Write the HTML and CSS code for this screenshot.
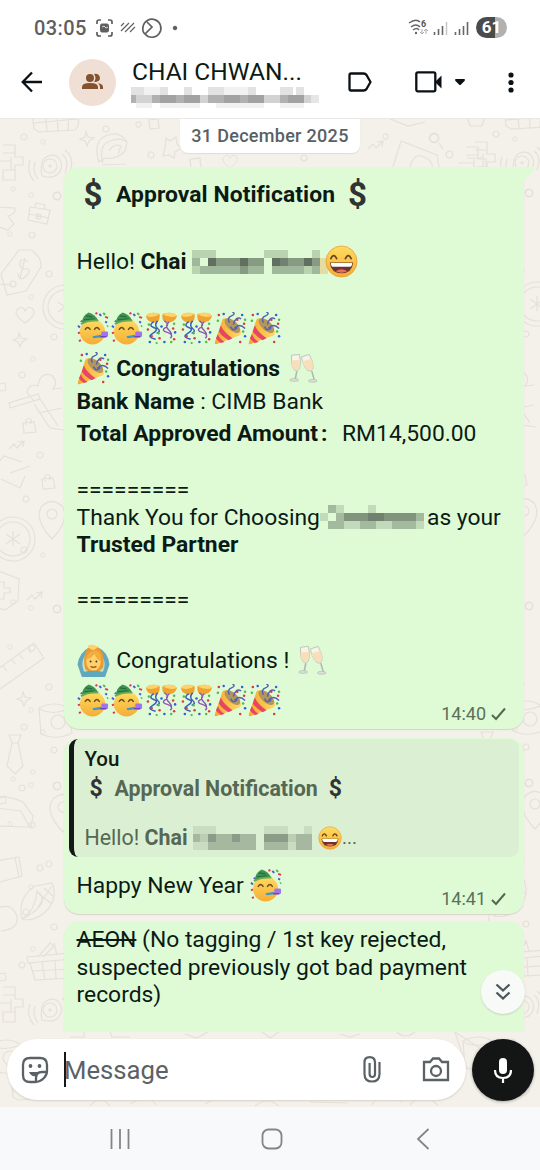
FILE: index.html
```html
<!DOCTYPE html>
<html lang="en">
<head>
  <meta charset="UTF-8">
  <meta name="viewport" content="width=device-width, initial-scale=1.0">
  <title>Chat</title>
  <link rel="stylesheet" href="styles.css">
</head>
<body>
  <!-- shared emoji and wallpaper shapes -->
  <svg class="defs" width="0" height="0">
    <defs>
      <linearGradient id="face" x1="0" y1="0" x2="0" y2="1"><stop offset="0" stop-color="#ffdc62"/><stop offset="1" stop-color="#f5ad35"/></linearGradient>
      <linearGradient id="cone" x1="0" y1="0" x2="1" y2="0"><stop offset="0" stop-color="#f6a72d"/><stop offset="1" stop-color="#ffd967"/></linearGradient>
      <symbol id="grin" viewBox="0 0 34 34">
        <circle cx="17" cy="17" r="16" fill="url(#face)" stroke="#e89b32" stroke-width=".8"/>
        <path d="M6 14q3-6 6 0M21 14q3-6 6 0" fill="none" stroke="#66421c" stroke-width="1.8" stroke-linecap="round"/>
        <path d="M5 18h24q-1 11-12 11T5 18z" fill="#69342a"/>
        <path d="M6 18.5h22q0 4-3 4H9q-3 0-3-4z" fill="#fff"/>
        <path d="M11 27q6-4 12 0-6 3-12 0z" fill="#ee6961"/>
      </symbol>
      <symbol id="party" viewBox="0 0 34 34">
        <circle cx="16" cy="20.500" r="13" fill="url(#face)"/>
        <path d="M5 12Q5 4 12 .5q7 2 10 8.500Q13 8 5 12z" fill="#3f9452"/>
        <path d="M9 4l7 1M7 8l11-1" stroke="#276c3d" stroke-width="1.200"/>
        <path d="M4 12.500q8-4.500 18-3.500" fill="none" stroke="#6cab52" stroke-width="1.800"/>
        <path d="M8.500 18q2.500-4 5 0M18 18q2.500-4 5 0" fill="none" stroke="#74491d" stroke-width="1.500" stroke-linecap="round"/>
        <path d="M16 25l9-1.500V26l-8 1z" fill="#3b98c9"/>
        <rect x="25" y="20" width="7" height="6" rx="1.500" fill="#a274ec"/><path d="M24 25.500h6" stroke="#7040c4" stroke-width="1.500"/>
        <path d="M1 14l2 2M23 2l2 2M31 11l-2-1M4 9l1 1" stroke="#4b58dd" stroke-width="2"/>
        <path d="M29 5l3 1M1 22l2-1M2 30l2-1M19 2l2-1" stroke="#dd3654" stroke-width="2"/>
        <path d="M27 1l2 2M31 15l1-1" stroke="#51b952" stroke-width="2"/>
      </symbol>
      <symbol id="confetti" viewBox="0 0 34 34">
        <path d="M1 4Q5-1 15 2q1 8-4 9Q2 11 1 4zM33 4Q29-1 18 2q-1 8 4 9 9 0 11-7z" fill="#efa331"/>
        <path d="M1 4Q5-1 15 2 9 7 1 4zM33 4Q29-1 18 2q7 5 15 2z" fill="#ffd36a"/>
        <path d="M9 10q-6 4 0 6t-1 6 3 6M13 9q-4 5 0 8t-1 5" fill="none" stroke="#385bb8" stroke-width="1.500"/>
        <path d="M20 9q6 4 1 7t2 5 3 6M25 10q-5 4-1 8t3 5" fill="none" stroke="#8b58b4" stroke-width="1.500"/>
        <g fill="#d93d46"><circle cx="3" cy="18" r="1.300"/><circle cx="15" cy="27" r="1.300"/><circle cx="29" cy="17" r="1.300"/><circle cx="30" cy="28" r="1.300"/><circle cx="7" cy="25" r="1.200"/></g>
        <g fill="#345fd5"><circle cx="5" cy="31" r="1.300"/><circle cx="17" cy="15" r="1.300"/><circle cx="31" cy="21" r="1.300"/><circle cx="20" cy="31" r="1.300"/></g>
        <g fill="#54bc4e"><circle cx="4" cy="13" r="1.300"/><circle cx="14" cy="22" r="1.300"/><circle cx="30" cy="12" r="1.300"/><circle cx="27" cy="31" r="1.300"/><circle cx="12" cy="32" r="1.200"/></g>
      </symbol>
      <symbol id="popper" viewBox="0 0 34 34">
        <path d="M8 10Q9 5 14 7q12 5 14 14 0 3-4 4L3 33q-3 1-2-2z" fill="url(#cone)"/>
        <path d="M7 14q3 7 12 13l-4 2Q8 25 5 20zM4 23q2 5 7 8l-4 1q-4-3-5-5z" fill="#e64663"/>
        <ellipse cx="19" cy="14" rx="10" ry="5" transform="rotate(42 19 14)" fill="#b3965a"/>
        <path d="M16 11q-3-5 2-7t1-4M20 13q2-9 8-6M21 17q5-6 11 0M17 15q3 6 7 1" fill="none" stroke="#5361b4" stroke-width="1.500"/>
        <g fill="#2e60dc"><circle cx="10" cy="2" r="1.300"/><circle cx="29" cy="3" r="1.300"/><circle cx="32" cy="25" r="1.300"/></g>
        <g fill="#df354c"><circle cx="5" cy="3" r="1.300"/><circle cx="24" cy="8" r="1.300"/><circle cx="31" cy="12" r="1.300"/><circle cx="27" cy="31" r="1.300"/></g>
        <g fill="#50b94d"><circle cx="4" cy="9" r="1.300"/><circle cx="32" cy="8" r="1.300"/><circle cx="30" cy="20" r="1.300"/></g>
      </symbol>
      <symbol id="glasses" viewBox="0 0 34 34">
        <g stroke="#b7c1b3" stroke-width="1">
          <path d="M4 2l9-1q3 17-3 19-7-1-6-18zM15 4l9-3q8 15 2 19-7 1-11-16z" fill="#f4f4e8"/>
          <path d="M4 8l9.500-1q1 11-3.500 12-6 0-6-11zM16 9l10.500-3q4 10-1 13-6 0-9.500-10z" fill="#f8dfba" stroke="none"/>
          <path d="M10 20L8 30M27 20l3 11" stroke="#aeb9ae" stroke-width="1.800"/>
          <ellipse cx="7" cy="30" rx="5" ry="1.500" fill="#dce4dc"/><ellipse cx="28" cy="31" rx="5" ry="1.500" fill="#dce4dc"/>
        </g>
      </symbol>
      <symbol id="okwoman" viewBox="0 0 34 34">
        <path d="M5 34L.5 21Q2 9 13 3q4-2 8 0 11 5 12.500 18L29 34z" fill="#62a9bf"/>
        <path d="M7 28Q3 17 10 10h14q7 8 3 18-10 7-20 0z" fill="#c8e3c4"/>
        <path d="M8 25Q5 5 16 2q14 1 11 22-3 5-10 5-7 0-9-4z" fill="#e99a32"/>
        <ellipse cx="17" cy="18" rx="7.500" ry="9.500" fill="#ffd169"/>
        <path d="M9 16Q12 5 21 7q5 3 4 11-5-2-7-8-3 5-9 6z" fill="#f2ac3f"/>
        <path d="M11 2q4-3 11 1l-4 3q-4 1-7-4z" fill="#ffd169"/>
        <circle cx="14" cy="18" r="1" fill="#49362a"/><circle cx="20" cy="18" r="1" fill="#49362a"/><path d="M14 23q3 2 6 0" fill="none" stroke="#ae4530" stroke-width="1.500"/>
        <path d="M6 29q11-3 22 0l-2 5H8z" fill="#5ca8c0"/>
      </symbol>

      <symbol id="d-maze" viewBox="0 0 26 38" overflow="visible"><path d="M4 1h12v12h8v8h-8v15H4V26h8v-9H-4M4 9h12M12 13v13h4"/></symbol>
      <symbol id="d-alarm" viewBox="0 0 44 34" overflow="visible"><path d="M12 27q-3-16 6-20 8-3 12 4t-2 14q-6 5-16 2zM8 30Q2 22 5 13M4 32q-8-9-4-21M32 5q8 6 3 19M35 1q10 8 5 21"/><circle cx="20" cy="17" r="7"/><circle cx="20" cy="17" r="1"/></symbol>
      <symbol id="d-choc" viewBox="0 0 50 16" overflow="visible"><path d="M1-6l2 19 5 3 36-2 3-4 2-16M3 7l44-4M14-4l2 19M26-4l1 19M38-4l-1 19"/></symbol>
      <symbol id="d-case" viewBox="0 0 24 22" overflow="visible"><path d="M2 5l20 3-3 14L0 18zM7 6l1-5 9 2-1 5M1 12l20 4M9 12l4 1-1 4-4-1z"/></symbol>
      <symbol id="d-basket" viewBox="0 0 44 34" overflow="visible"><path d="M0 10l44-4v6L1 16zM3 16l5 17 36-2M15 15l3 18M28 14l1 18M5 24l39-2M11 10L23-4l4 3-11 11M30 8l-3-12"/></symbol>
      <symbol id="d-bag" viewBox="0 0 14 14" overflow="visible"><path d="M1 4l11-1 2 10-12 1zM4 6V1q3-3 5 0v4"/></symbol>
      <symbol id="d-heart" viewBox="0 0 18 16" overflow="visible"><path d="M9 16Q-4 7 2 2q5-4 7 2 3-6 8-2 4 6-8 14z"/></symbol>
      <symbol id="d-star" viewBox="0 0 14 14" overflow="visible"><path d="M6 0l2 5 6 1-5 3-2 5-2-5-5-2 5-2z"/></symbol>
      <symbol id="d-taco" viewBox="0 0 36 34" overflow="visible"><path d="M4 28Q-3 6 13 1q12-4 19 7l-2 9q-8 9-20 7zM8 29q-5-18 7-22 10-4 17 1M7 31l24-1M14 17q5-8 12-5l-3 8"/></symbol>
      <symbol id="d-tag" viewBox="0 0 40 46" overflow="visible"><path d="M18 1h12q11 7 10 17L25 42 6 46 0 25z"/><path d="M27 13q-7-5-8 1t6 6 0 7-8-3M24 9l-5 20"/><circle cx="12" cy="35" r="3"/></symbol>
      <symbol id="d-coin" viewBox="0 0 46 46" overflow="visible"><circle cx="23" cy="23" r="22"/><circle cx="23" cy="23" r="17"/><path d="M23 15v15M16 18l14 10M30 18L16 28"/></symbol>
      <symbol id="d-ruler" viewBox="0 0 60 46" overflow="visible"><path d="M0 34L47 0l10 15L10 48zM8 28l3 4M16 23l4 5M25 17l3 4M33 12l3 4M41 6l3 4"/></symbol>
      <symbol id="d-cup" viewBox="0 0 36 36" overflow="visible"><path d="M0 5q16-8 29 0l4 25q-16 8-31 1zM0 6q14 7 29 0"/><circle cx="19" cy="19" r="7"/></symbol>
      <symbol id="d-corn" viewBox="0 0 36 38" overflow="visible"><path d="M2 36Q-3 15 15 3l17-3q7 17-8 30-11 9-22 6zM2 36q13-8 15-28 16 12-15 28M18 10l14 11M24 5l10 9M18 24L31 4"/></symbol>
      <symbol id="d-tie" viewBox="0 0 16 38" overflow="visible"><path d="M2 0h12l-3 8 5 23-8 8-8-8L5 8zM5 8h6"/></symbol>
      <symbol id="d-pin" viewBox="0 0 28 38" overflow="visible"><path d="M14 38Q-5 18 4 5q10-9 20 0 9 13-10 33z"/><circle cx="14" cy="13" r="5"/></symbol>
      <symbol id="d-shield" viewBox="0 0 28 38" overflow="visible"><path d="M-4 4l14-4 18 7-1 22-13 9-18-6M2 16h6v-6h5v6h6v5h-6v6H8v-6H2"/></symbol>
      <symbol id="d-box" viewBox="0 0 10 10" overflow="visible"><path d="M0 1l9-1 1 9-9 1z"/></symbol>
      <symbol id="d-dot" viewBox="0 0 8 8" overflow="visible"><circle cx="4" cy="4" r="3"/></symbol>
      <symbol id="d-zig" viewBox="0 0 16 10" overflow="visible"><path d="M0 8l5-5 3 4 6-6M9 1l6-1-1 6"/></symbol>
      <g id="strip">
        <use href="#d-maze" x="-1" y="25" width="26" height="38"/><use href="#d-alarm" x="30" y="30" width="44" height="34"/><use href="#d-choc" x="31" y="-3" width="50" height="16"/>
        <use href="#d-case" x="28" y="83" width="24" height="22"/><use href="#d-tag" x="1" y="130" width="40" height="46"/><use href="#d-heart" x="16" y="188" width="18" height="16"/>
        <use href="#d-star" x="13" y="214" width="14" height="14"/><use href="#d-coin" x="42" y="165" width="46" height="46"/><path d="M34 282l-7-9q2-9 11-6 2-14 13-11 8 6 2 14l9-1M10 289l30-9-2-5-29 9zM34 285l16 24 14 2M40 280l18 27M38 294l24-5"/>
        <use href="#d-bag" x="22" y="300" width="14" height="14"/><use href="#d-bag" x="41" y="356" width="14" height="14"/><use href="#d-zig" x="9" y="322" width="16" height="10"/>
        <path d="M-4 346l8-9 18 6M10 354l20-7M1 360l19 9 5-12M-4 88l19 1q1 6-7 8l6 8-6 6-12-4M-4 165l16 1"/>
        <use href="#d-coin" x="-10" y="397" width="46" height="46"/><use href="#d-pin" x="38" y="382" width="28" height="38"/><use href="#d-shield" x="-9" y="453" width="28" height="38"/><use href="#d-zig" x="27" y="473" width="16" height="10"/>
        <use href="#d-ruler" x="-13" y="524" width="60" height="46"/><use href="#d-star" x="17" y="573" width="14" height="14"/><use href="#d-cup" x="39" y="580" width="36" height="44"/><use href="#d-tie" x="7" y="616" width="16" height="38"/>
        <path d="M-4 680q10-5 27 3l10 14-2 11-35-1M-4 689l25 3 8 15M-4 742l23-4 3 19-22 6M15 739l4 19M-3 789q16-6 20 9 2 12-16 14"/>
        <use href="#d-corn" x="20" y="764" width="36" height="38"/><use href="#d-basket" x="27" y="828" width="44" height="34"/><use href="#d-maze" x="-1" y="867" width="26" height="38"/><use href="#d-alarm" x="30" y="874" width="44" height="34"/>
        <use href="#d-pin" x="49" y="675" width="28" height="38"/><use href="#d-choc" x="10" y="965" width="50" height="16"/><use href="#d-cup" x="-9" y="920" width="36" height="36"/>
        <g id="dots">
          <use href="#d-dot" x="20" y="14" width="8" height="8"/><use href="#d-dot" x="40" y="20" width="6" height="6"/><use href="#d-dot" x="10" y="67" width="6" height="6"/><use href="#d-dot" x="28" y="73" width="6" height="6"/><use href="#d-dot" x="52" y="72" width="10" height="10"/>
          <use href="#d-dot" x="28" y="112" width="8" height="8"/><use href="#d-dot" x="7" y="112" width="6" height="6"/><use href="#d-dot" x="45" y="151" width="8" height="8"/><use href="#d-dot" x="28" y="175" width="6" height="6"/><use href="#d-dot" x="50" y="214" width="8" height="8"/><use href="#d-dot" x="18" y="252" width="8" height="8"/><use href="#d-dot" x="30" y="237" width="6" height="6"/>
          <use href="#d-dot" x="36" y="332" width="8" height="8"/><use href="#d-dot" x="22" y="376" width="8" height="8"/><use href="#d-box" x="-2" y="263" width="8" height="10"/>
        </g>
        <use href="#dots" y="413"/><use href="#dots" y="590"/>
      </g>
    </defs>
  </svg>

  <div class="phone">
    <header class="status-bar">
      <span class="clock">03:05</span>
      <svg class="status-icons" width="84" height="22" viewBox="0 0 84 22" fill="none" stroke="#5e5e5e" stroke-width="1.700">
        <path d="M7 3H5q-2 0-2 2v2M3 15v2q0 2 2 2h2M14 3h2q2 0 2 2v2M18 15v2q0 2-2 2h-2"/><rect x="6.500" y="7" width="8" height="8" rx="1.500" fill="#5e5e5e" stroke-width="1"/><path d="M8 10l2-1 2 2 2-1" stroke="#ddd" stroke-width="1"/>
        <path d="M27 9l3-3M27 14l8-8M31 15l9-9M36 15l5-5" stroke-width="1.100"/>
        <path d="M51 17a9 9 0 1 0-2-7q-1 5 2 7l7-7-5-5" stroke-width="1.700"/>
        <circle cx="81" cy="11" r="1.800" fill="#5e5e5e" stroke-width="1"/>
      </svg>
      <div class="status-right">
        <svg width="63" height="20" viewBox="0 0 63 20" fill="none" stroke="#666">
          <path d="M2 5q7-5 11-1M4 9q5-4 9 0M6 12q4-3 6 0" stroke-width="1.500"/><circle cx="9" cy="15" r="1.200" fill="#666" stroke="none"/>
          <path d="M15 11v5m-2-2l2 2 2-2M19 16v-5m-2 2l2-2 2 2" stroke="#aaa"/>
          <path d="M27.500 17v-3M31.500 17v-6M35.500 17V8M48.500 17v-3M52.500 17v-6M56.500 17V8M60.500 17V4" stroke-width="1.600"/><path d="M39.500 17V4" stroke="#c6c6c6" stroke-width="1.500"/>
          <text x="14" y="9" class="wifi-number">6</text>
        </svg>
        <span class="battery">61</span>
      </div>
    </header>

    <div class="app-bar">
      <svg class="back" width="22" height="22" viewBox="0 0 22 22" fill="none" stroke="#0b1014" stroke-width="2.300"><path d="M21 11H2M11 1.500L1.700 11l9.300 9.500"/></svg>
      <div class="avatar">
        <svg width="22" height="18" viewBox="0 0 22 18" fill="#83532f"><circle cx="8" cy="5" r="4"/><path d="M0 16v-2q0-4 8-4t8 4v2zM12 9q3-4 0-8 5-1 6 4 0 4-6 4zM16 10q5 1 5 4v2h-3v-2q0-2-2-4z"/></svg>
      </div>
      <div class="contact">
        <div class="contact-name">CHAI CHWAN...</div>
        <svg class="members" width="188" height="24" viewBox="0 0 188 24" shape-rendering="crispEdges">
          <path fill="#e2e2e2" d="M0 0h13v8H0zM29 0h8v8h-8zM53 0h8v8h-8zM77 0h16v8H77zM117 0h8v8h-8zM149 0h13v8h-13zM165 0h8v8h-8z"/>
          <path fill="#f1f1f1" d="M13 0h16v8H13zM93 0h24v8H93zM5 16h16v5H5zM29 16h40v5H29zM85 16h48v5H85zM149 16h24v5h-24z"/>
          <path fill="#d2d2d2" d="M5 8h16v8H5zM69 8h8v8h-8zM133 8h16v8h-16zM173 8h7v8h-7z"/><path fill="#e6e6e6" d="M180 8h8v8h-8z"/>
          <path fill="#b1b1b1" d="M0 8h5v8H0zM21 8h8v8h-8zM45 8h8v8h-8zM77 8h16v8H77zM109 8h8v8h-8zM149 8h8v8h-8z"/>
          <path fill="#a2a2a2" d="M29 8h16v8H29zM53 8h16v8H53zM93 8h16v8H93zM117 8h16v8h-16zM157 8h16v8h-16z"/>
        </svg>
      </div>
      <svg class="label" width="24" height="20" viewBox="0 0 24 20" fill="none" stroke="#0b1014" stroke-width="2.300" stroke-linejoin="round"><path d="M3 1.500h12.500q2 0 3 1.500l4 7-4 7q-1 1.500-3 1.500H3q-1.500 0-1.500-1.500V3Q1.500 1.500 3 1.500z"/></svg>
      <svg class="video" width="27" height="22" viewBox="0 0 27 22"><rect x="1.300" y="1.300" width="19" height="19" rx="1.500" fill="none" stroke="#0b1014" stroke-width="2.300"/><path d="M20 11l6.500-6.500v13z" fill="#0b1014"/></svg>
      <svg class="caret" width="12" height="8" viewBox="0 0 12 8"><path d="M1.500 1h9q1 1 0 2L7 6.500q-1 1-2 0L1.500 3q-1-1 0-2z" fill="#0b1014"/></svg>
      <svg class="more" width="6" height="21" viewBox="0 0 6 21" fill="#0b1014"><circle cx="3" cy="3" r="2.600"/><circle cx="3" cy="10.500" r="2.600"/><circle cx="3" cy="18" r="2.600"/></svg>
    </div>

    <main class="chat">
      <svg class="wallpaper" width="540" height="988" viewBox="0 0 540 988">
        <use href="#strip"/>
        <use href="#strip" x="472" y="-3"/>
        <use href="#d-star" x="80" y="13" width="14" height="14"/><use href="#d-taco" x="95" y="15" width="36" height="34"/><use href="#d-dot" x="102" y="6" width="8" height="8"/><use href="#d-dot" x="135" y="2" width="7" height="7"/><use href="#d-box" x="149" y="0" width="10" height="10"/><use href="#d-dot" x="147" y="32" width="8" height="8"/><path d="M166 19l4 3 6-4 1 7 4 4-6 4-1 6-5-3-6 1 2-8z"/>
        <use href="#d-zig" x="368" y="22" width="16" height="10"/><use href="#d-dot" x="382" y="14" width="7" height="7"/><use href="#d-dot" x="428" y="13" width="12" height="12"/><path d="M439 24l4 6M401 22l-8 26M401 22l36 14 2 12M410 48q4-15 14-10t8 11M390 0l18 7 17-4M468 0l2 7h12l2-7"/><use href="#d-maze" x="462" y="27" width="26" height="38"/><use href="#d-dot" x="445" y="31" width="9" height="9"/>
        <use href="#d-dot" x="300" y="35" width="8" height="8"/><use href="#d-box" x="190" y="39" width="11" height="11"/><use href="#d-heart" x="222" y="36" width="16" height="13"/>
        <g transform="translate(0 913)"><path d="M70 5h14V-2M110 0l2 5h18M185 2l12 4 14-8M260-2l10 8 12-8M340 2l10 3 10-3M395-2q10 12 22 0M455 0l12 37 34-7z"/><path d="M90 74q10-12 20 0M130 72l18-9 8 10M205 72q16-10 40-4M255 74q12-10 24 0M310 70l38 1M372 73q13-22 29-3M410 73l12-12 16 12"/></g>
      </svg>

      <div class="messages">
        <div class="date">31 December 2025</div>

        <div class="bubble first">
          <div class="line tall"><b class="dollar">$</b><b>Approval Notification</b><b class="dollar end">$</b></div>
          <div class="line"></div>
          <div class="line tall">Hello! <b>Chai </b><svg class="mosaic" width="136" height="24" viewBox="0 0 136 24" shape-rendering="crispEdges">
              <path fill="#b9d3b1" d="M0 0h24v8H0zM72 0h24v8H72zM120 0h8v8h-8zM0 16h8v8H0zM112 16h8v8h-8z"/>
              <path fill="#9fb79a" d="M0 8h8v8H0zM8 16h40v8H8zM56 16h16v8H56zM80 16h32v8H80zM120 16h8v8h-8z"/>
              <path fill="#879b82" d="M24 8h24v8H24zM56 8h16v8H56zM96 8h16v8H96zM48 16h8v8h-8zM120 8h8v8h-8z"/>
              <path fill="#606f5f" d="M16 8h8v8h-8zM48 8h8v8h-8zM80 8h8v8h-8zM112 8h8v8h-8z"/><path fill="#718170" d="M88 8h8v8h-8z"/><path fill="#e4dda2" d="M128 8h8v16h-8z"/>
            </svg><svg class="emoji overlap"><use href="#grin"/></svg></div>
          <div class="line"></div>
          <div class="line tall emojis"><svg class="emoji"><use href="#party"/></svg><svg class="emoji"><use href="#party"/></svg><svg class="emoji"><use href="#confetti"/></svg><svg class="emoji"><use href="#confetti"/></svg><svg class="emoji"><use href="#popper"/></svg><svg class="emoji"><use href="#popper"/></svg></div>
          <div class="line tall"><svg class="emoji"><use href="#popper"/></svg><b class="congrats"> Congratulations </b><svg class="emoji toast"><use href="#glasses"/></svg></div>
          <div class="line"><b>Bank Name</b> : CIMB Bank</div>
          <div class="line amount"><b>Total Approved Amount</b><b class="wide-colon">:</b>RM14,500.00</div>
          <div class="line"></div>
          <div class="line">=========</div>
          <div class="line">Thank You for Choosing<svg class="mosaic agency" width="104" height="24" viewBox="0 0 104 24" shape-rendering="crispEdges">
              <path fill="#c1dab9" d="M0 8h8v8H0zM16 0h8v8h-8zM48 0h8v8h-8zM24 16h16v8H24zM56 16h16v8H56zM96 16h8v8h-8z"/>
              <path fill="#a4ba9f" d="M8 0h8v8H8zM16 8h8v8h-8zM8 16h16v8H8zM40 16h16v8H40zM72 16h24v8H72zM96 8h8v8h-8z"/>
              <path fill="#83947e" d="M24 8h24v8H24zM64 8h32v8H64z"/><path fill="#718170" d="M48 8h16v8H48z"/>
            </svg>as your</div>
          <div class="line"><b>Trusted Partner</b></div>
          <div class="line"></div>
          <div class="line">=========</div>
          <div class="line"></div>
          <div class="line tall"><svg class="emoji"><use href="#okwoman"/></svg><span class="congrats"> Congratulations ! </span><svg class="emoji toast"><use href="#glasses"/></svg></div>
          <div class="line tall emojis"><svg class="emoji"><use href="#party"/></svg><svg class="emoji"><use href="#party"/></svg><svg class="emoji"><use href="#confetti"/></svg><svg class="emoji"><use href="#confetti"/></svg><svg class="emoji"><use href="#popper"/></svg><svg class="emoji"><use href="#popper"/></svg></div>
          <div class="time">14:40 <svg width="15" height="14" viewBox="0 0 15 14"><path d="M1 8l4 4L14 1.500"/></svg></div>
        </div>

        <div class="bubble second">
          <div class="quote">
            <div class="quote-name">You</div>
            <div class="quote-title"><b class="dollar">$</b><b>Approval Notification</b><b class="dollar end">$</b></div>
            <div class="quote-text">Hello! <b>Chai </b><svg class="mosaic" width="119" height="24" viewBox="0 0 119 24" shape-rendering="crispEdges">
                <path fill="#c9ddc1" d="M0 0h23v8H0zM71 0h24v8H71zM111 0h8v8h-8zM0 16h15v8H0zM95 16h8v8h-8z"/>
                <path fill="#a6b9a0" d="M0 8h7v8H0zM23 8h16v8H23zM47 8h16v8H47zM103 8h16v8h-16zM15 16h48v8H15zM71 16h24v8H71zM103 16h16v8h-16z"/>
                <path fill="#bccfb5" d="M7 8h8v8H7zM95 8h8v8h-8z"/>
                <path fill="#8a9d88" d="M15 8h8v8h-8zM39 8h8v8h-8zM71 8h24v8H71z"/>
              </svg><svg class="emoji small"><use href="#grin"/></svg><span class="dots">...</span></div>
          </div>
          <div class="line tall reply">Happy New Year <svg class="emoji"><use href="#party"/></svg></div>
          <div class="time">14:41 <svg width="15" height="14" viewBox="0 0 15 14"><path d="M1 8l4 4L14 1.500"/></svg></div>
        </div>

        <div class="bubble third"><s>AEON</s> (No tagging / 1st key rejected, suspected previously got bad payment records)</div>
      </div>

      <div class="scroll-down"><svg width="16" height="18" viewBox="0 0 16 18" fill="none" stroke="#4d5559" stroke-width="2.300"><path d="M1.500 1.500L8 7.500l6.500-6M1.500 9.500l6.500 6 6.500-6"/></svg></div>

      <div class="composer">
        <div class="input">
          <svg width="28" height="28" viewBox="0 0 28 28" fill="none" stroke="#5b6266" stroke-width="2.300"><path d="M9 2h10q7 0 7 7v6q0 4-3 7-4 4-9 4H9q-7 0-7-7V9q0-7 7-7zM15 26v-4q0-6 6-6h5"/><circle cx="9.500" cy="10" r="1.900" fill="#5b6266" stroke="none"/><circle cx="18.500" cy="10" r="1.900" fill="#5b6266" stroke="none"/><path d="M8 16h10l-3 4q-5 1-7-4z" fill="#5b6266" stroke="none"/></svg>
          <span class="cursor"></span><span class="placeholder">Message</span>
          <svg class="clip" width="18" height="27" viewBox="0 0 18 27" fill="none" stroke="#5b6266" stroke-width="2.200"><path d="M16.500 6v12q0 7.500-7.500 7.500T1.500 18V6.500Q1.500 1.200 6.700 1.200T12 6.500V18q0 3-2.700 3t-2.700-3V7"/></svg>
          <svg class="camera" width="28" height="25" viewBox="0 0 28 25" fill="none" stroke="#5b6266" stroke-width="2.300"><path d="M2 5h6l3-3.500h6L20 5h6v18H2z"/><circle cx="14" cy="14" r="5"/></svg>
        </div>
        <div class="mic"><svg width="20" height="27" viewBox="0 0 20 27"><rect x="6" y="1" width="8" height="16" rx="4" fill="#fff"/><path d="M2 13q0 8 8 8t8-8M10 21v5" fill="none" stroke="#fff" stroke-width="2.200"/></svg></div>
      </div>
    </main>

    <nav class="nav-bar">
      <svg width="20" height="22" viewBox="0 0 20 22" fill="none" stroke="#858588" stroke-width="1.800"><path d="M1.500 1v20M10 1v20M18.500 1v20"/></svg>
      <svg class="home" width="22" height="22" viewBox="0 0 22 22" fill="none" stroke="#858588" stroke-width="1.800"><rect x="1.500" y="1.500" width="19" height="19" rx="6"/></svg>
      <svg width="14" height="22" viewBox="0 0 14 22" fill="none" stroke="#858588" stroke-width="1.800"><path d="M12.500 1L2 11l10.500 10"/></svg>
    </nav>
  </div>
</body>
</html>
```

FILE: styles.css
```css
* {
  box-sizing: border-box;
}

body {
  margin: 0;
  font-family: Roboto, "Noto Sans", sans-serif;
  color: #0b1a14;
}

svg {
  display: block;
  flex-shrink: 0;
}

b {
  font-weight: 700;
}

.defs {
  position: absolute;
}

.phone {
  width: 540px;
  height: 1170px;
  display: flex;
  flex-direction: column;
  background: #fff;
  overflow: hidden;
}

.status-bar {
  height: 55px;
  flex-shrink: 0;
  display: flex;
  align-items: center;
  padding: 0 33px 0 34px;
}

.clock {
  width: 60px;
  font-size: 20px;
  font-weight: 500;
  letter-spacing: .4px;
  color: #5e5e5e;
}

.status-icons {
  margin-top: 1px;
}

.status-right {
  display: flex;
  align-items: center;
  gap: 6px;
  margin-left: auto;
}

.wifi-number {
  font-size: 9px;
  font-weight: 700;
  fill: #555;
  stroke: none;
}

.battery {
  width: 31px;
  height: 21px;
  border-radius: 11px;
  background: linear-gradient(90deg, #4b4b4b 60%, #b1b1b1 60%);
  color: #fff;
  font-size: 17px;
  font-weight: 700;
  line-height: 21px;
  text-align: center;
}

.app-bar {
  height: 64px;
  flex-shrink: 0;
  display: flex;
  align-items: center;
  padding: 0 26px 9px 21px;
  border-bottom: 1px solid #e9e8e5;
}

.avatar {
  width: 47px;
  height: 47px;
  margin: 0 16px 0 26px;
  border-radius: 50%;
  background: #efdfd4;
  display: flex;
  align-items: center;
  justify-content: center;
}

.contact {
  width: 188px;
  padding-top: 4px;
}

.contact-name {
  height: 29px;
  font-size: 24.5px;
  line-height: 28px;
  white-space: nowrap;
}

.members {
  margin-left: -1px;
}

.label {
  margin-left: 28px;
}

.video {
  margin-left: 43px;
}

.caret {
  margin-left: 12px;
}

.more {
  margin-left: auto;
}

.chat {
  position: relative;
  flex: 1;
  display: flex;
  flex-direction: column;
  background: #f4f0ea;
  overflow: hidden;
}

/* doodles lie behind the conversation */
.wallpaper {
  position: absolute;
  inset: 0;
  fill: none;
  stroke: #e6e0d8;
  stroke-width: 1.2;
}

.messages {
  position: relative;
  height: 913px;
  padding: 0 16px 0 64px;
  overflow: hidden;
}

.date {
  width: 180px;
  height: 34px;
  margin: 0 0 14px 116px;
  border-radius: 0 0 8px 8px;
  background: #fff;
  color: #596064;
  font-size: 18px;
  font-weight: 500;
  letter-spacing: .3px;
  line-height: 33px;
  text-align: center;
  box-shadow: 0 1px 1px #e2ddd6;
}

.bubble {
  position: relative;
  width: 460px;
  padding: 8px 12.5px 0;
  border-radius: 15px;
  background: #dffbd6;
  box-shadow: 0 1px 1px #d9d3c9;
  font-size: 22.85px;
  line-height: 27.5px;
}

.first {
  height: 562px;
  border-top-right-radius: 0;
}

/* tail beside the top right corner */
.first::after {
  content: "";
  position: absolute;
  top: 0;
  left: 459px;
  width: 13px;
  height: 14px;
  background: #dffbd6;
  clip-path: polygon(0 0, 85% 0, 100% 12%, 0 100%);
}

.line {
  height: 27.5px;
  display: flex;
  align-items: center;
  white-space: pre;
}

.tall {
  height: 39.5px;
}

.first > .tall:first-child b {
  letter-spacing: .08px;
}

.amount {
  height: 33px;
  padding-top: 4px;
}

.wide-colon {
  width: 24px;
  padding-left: 3px;
}

.congrats {
  padding-left: 1px;
}

.agency {
  margin-right: 3px;
}

.dollar {
  width: 39.5px;
  padding-left: 7px;
  color: #303331;
  font-size: 33px;
}

.dollar.end {
  padding-left: 13px;
}

.emoji {
  width: 33px;
  height: 33px;
}

.emojis {
  gap: 1.4px;
}

.overlap {
  margin-left: -3px;
}

.toast {
  width: 30px;
  margin-left: 2px;
}

.time {
  position: absolute;
  right: 18px;
  bottom: 4px;
  display: flex;
  align-items: center;
  gap: 5px;
  color: #5a7158;
  font-size: 18px;
  line-height: 22px;
}

.time svg {
  fill: none;
  stroke: #526950;
  stroke-width: 2;
}

.second {
  height: 176px;
  margin-top: 9px;
  padding-top: 1px;
}

.quote {
  width: 450px;
  height: 118px;
  margin-left: -8px;
  padding: 7px 0 0 11px;
  border-left: 5px solid #151817;
  border-radius: 9px;
  background: #dbf0d3;
  color: #566853;
  font-size: 21.4px;
}

.quote-name {
  height: 27px;
  color: #101b14;
  font-size: 20.5px;
  font-weight: 500;
}

.quote-title,
.quote-text {
  display: flex;
  align-items: center;
  white-space: pre;
}

.quote-title {
  height: 31px;
}

.quote-title .dollar {
  width: 30px;
  padding-left: 5px;
  font-size: 23px;
}

.quote-title .dollar.end {
  padding-left: 11px;
}

.quote-text {
  height: 27px;
  margin-top: 20px;
}

.emoji.small {
  width: 24px;
  height: 24px;
  margin-left: 6px;
}

.dots {
  font-size: 19px;
}

.reply {
  margin-top: 9px;
}

.reply .emoji {
  margin-left: 1px;
}

.third {
  height: 150px;
  margin-top: 7px;
  padding-top: 5px;
}

.scroll-down {
  position: absolute;
  left: 481px;
  top: 851px;
  width: 44px;
  height: 44px;
  border-radius: 50%;
  background: #f8faf8;
  box-shadow: 0 1px 2px #c4d4be;
  display: flex;
  align-items: center;
  justify-content: center;
}

.composer {
  position: relative;
  display: flex;
  gap: 6px;
  padding: 7px 6px 0 7px;
}

.input {
  width: 459px;
  height: 61px;
  border-radius: 31px;
  background: #fff;
  box-shadow: 0 1px 2px #d5d0c9;
  display: flex;
  align-items: center;
  padding: 0 16px 0 14px;
}

.cursor {
  width: 2px;
  height: 35px;
  margin-left: 15px;
  background: #151817;
}

.placeholder {
  margin-left: -2px;
  color: #5b6266;
  font-size: 25.7px;
}

.clip {
  margin-left: auto;
}

.camera {
  margin-left: 41px;
}

.mic {
  width: 62px;
  height: 62px;
  border-radius: 50%;
  background: #141616;
  box-shadow: 0 1px 3px #aaa;
  display: flex;
  align-items: center;
  justify-content: center;
}

.nav-bar {
  height: 63px;
  flex-shrink: 0;
  display: flex;
  align-items: center;
  justify-content: space-between;
  padding: 0 110px;
  background: #f8f9fb;
}

.home {
  margin-right: 3px;
}
```
